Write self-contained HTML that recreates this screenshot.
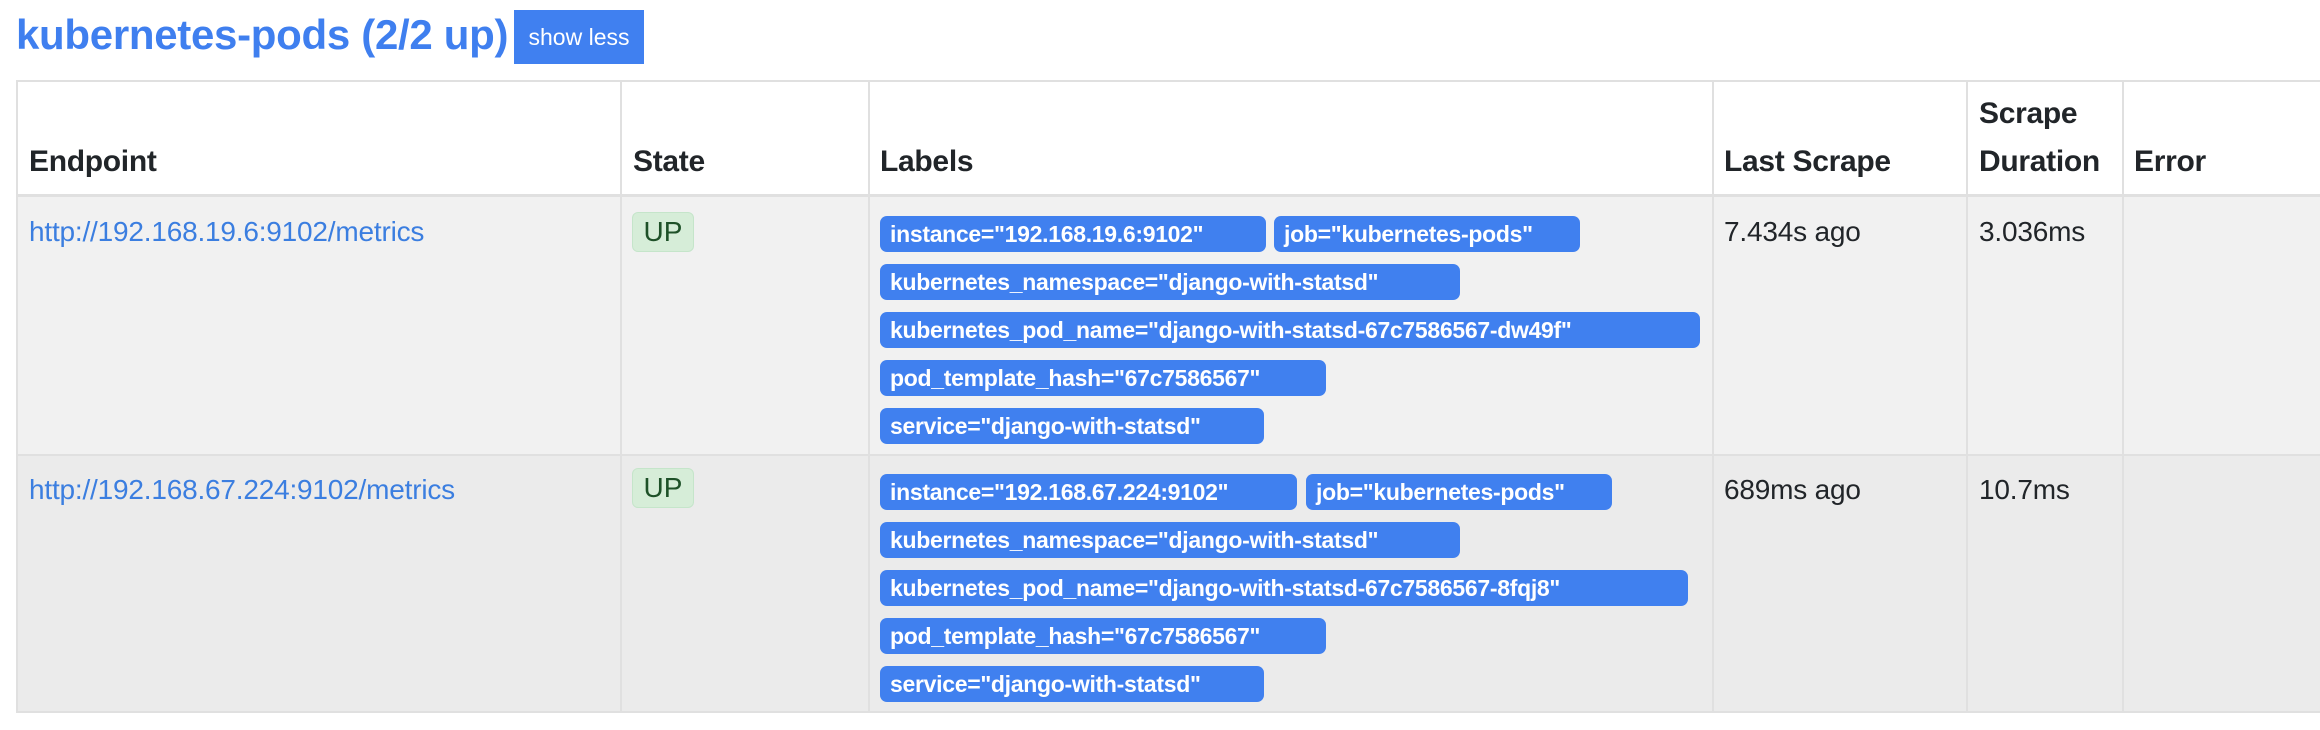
<!DOCTYPE html>
<html><head><meta charset="utf-8"><style>
*{margin:0;padding:0;box-sizing:border-box}
body{width:2320px;height:730px;background:#fff;position:relative;overflow:hidden;font-family:"Liberation Sans",Arial,sans-serif;color:#212529}
.a{position:absolute}
.title{left:16px;top:7px;font-size:42px;font-weight:bold;color:#3f7fef;letter-spacing:-0.3px;white-space:nowrap;line-height:56px}
.btn{left:514px;top:10px;width:130px;height:54px;background:#4080f0;color:#fff;font-size:23px;line-height:54px;text-align:center}
.hl{background:#e0e0e0}
.th{font-size:30px;font-weight:bold;white-space:nowrap;line-height:48px;letter-spacing:-0.3px}
.td{font-size:28px;white-space:nowrap;line-height:36px;letter-spacing:-0.2px}
.lnk{color:#3b7ee0}
.b{height:36px;background:#4080ef;color:#fff;border-radius:7px;font-size:23px;font-weight:bold;line-height:36px;padding-left:10px;white-space:nowrap;overflow:hidden;letter-spacing:-0.3px}
.up{width:62px;height:40px;background:#d6edd8;border:1px solid #c5e5ca;border-radius:6px;color:#1e5128;font-size:28px;line-height:38px;text-align:center}
</style></head><body>
<div class="a title">kubernetes-pods (2/2 up)</div>
<div class="a btn">show less</div>

<div class="a" style="left:17px;top:82px;width:2303px;height:113px;background:#fff"></div>
<div class="a" style="left:17px;top:197px;width:2303px;height:257px;background:#f1f1f1"></div>
<div class="a" style="left:17px;top:456px;width:2303px;height:256px;background:#ebebeb"></div>
<div class="a hl" style="left:17px;top:80px;width:2303px;height:2px"></div>
<div class="a hl" style="left:17px;top:194px;width:2303px;height:3px"></div>
<div class="a hl" style="left:17px;top:454px;width:2303px;height:2px"></div>
<div class="a hl" style="left:17px;top:711px;width:2303px;height:2px"></div>
<div class="a hl" style="left:16px;top:80px;width:2px;height:633px"></div>
<div class="a hl" style="left:620px;top:80px;width:2px;height:633px"></div>
<div class="a hl" style="left:868px;top:80px;width:2px;height:633px"></div>
<div class="a hl" style="left:1712px;top:80px;width:2px;height:633px"></div>
<div class="a hl" style="left:1966px;top:80px;width:2px;height:633px"></div>
<div class="a hl" style="left:2122px;top:80px;width:2px;height:633px"></div>

<div class="a th" style="left:29px;top:138px">Endpoint</div>
<div class="a th" style="left:633px;top:138px">State</div>
<div class="a th" style="left:880px;top:138px">Labels</div>
<div class="a th" style="left:1724px;top:138px">Last Scrape</div>
<div class="a th" style="left:1979px;top:90px">Scrape</div>
<div class="a th" style="left:1979px;top:138px">Duration</div>
<div class="a th" style="left:2134px;top:138px">Error</div>

<div class="a td lnk" style="left:29px;top:214px">http://192.168.19.6:9102/metrics</div>
<div class="a up" style="left:632px;top:212px">UP</div>
<div class="a b" style="left:880px;top:216px;width:386px">instance="192.168.19.6:9102"</div>
<div class="a b" style="left:1274px;top:216px;width:306px">job="kubernetes-pods"</div>
<div class="a b" style="left:880px;top:264px;width:580px">kubernetes_namespace="django-with-statsd"</div>
<div class="a b" style="left:880px;top:312px;width:820px">kubernetes_pod_name="django-with-statsd-67c7586567-dw49f"</div>
<div class="a b" style="left:880px;top:360px;width:446px">pod_template_hash="67c7586567"</div>
<div class="a b" style="left:880px;top:408px;width:384px">service="django-with-statsd"</div>
<div class="a td" style="left:1724px;top:214px">7.434s ago</div>
<div class="a td" style="left:1979px;top:214px">3.036ms</div>

<div class="a td lnk" style="left:29px;top:472px">http://192.168.67.224:9102/metrics</div>
<div class="a up" style="left:632px;top:468px">UP</div>
<div class="a b" style="left:880px;top:474px;width:417px">instance="192.168.67.224:9102"</div>
<div class="a b" style="left:1306px;top:474px;width:306px">job="kubernetes-pods"</div>
<div class="a b" style="left:880px;top:522px;width:580px">kubernetes_namespace="django-with-statsd"</div>
<div class="a b" style="left:880px;top:570px;width:808px">kubernetes_pod_name="django-with-statsd-67c7586567-8fqj8"</div>
<div class="a b" style="left:880px;top:618px;width:446px">pod_template_hash="67c7586567"</div>
<div class="a b" style="left:880px;top:666px;width:384px">service="django-with-statsd"</div>
<div class="a td" style="left:1724px;top:472px">689ms ago</div>
<div class="a td" style="left:1979px;top:472px">10.7ms</div>
</body></html>
